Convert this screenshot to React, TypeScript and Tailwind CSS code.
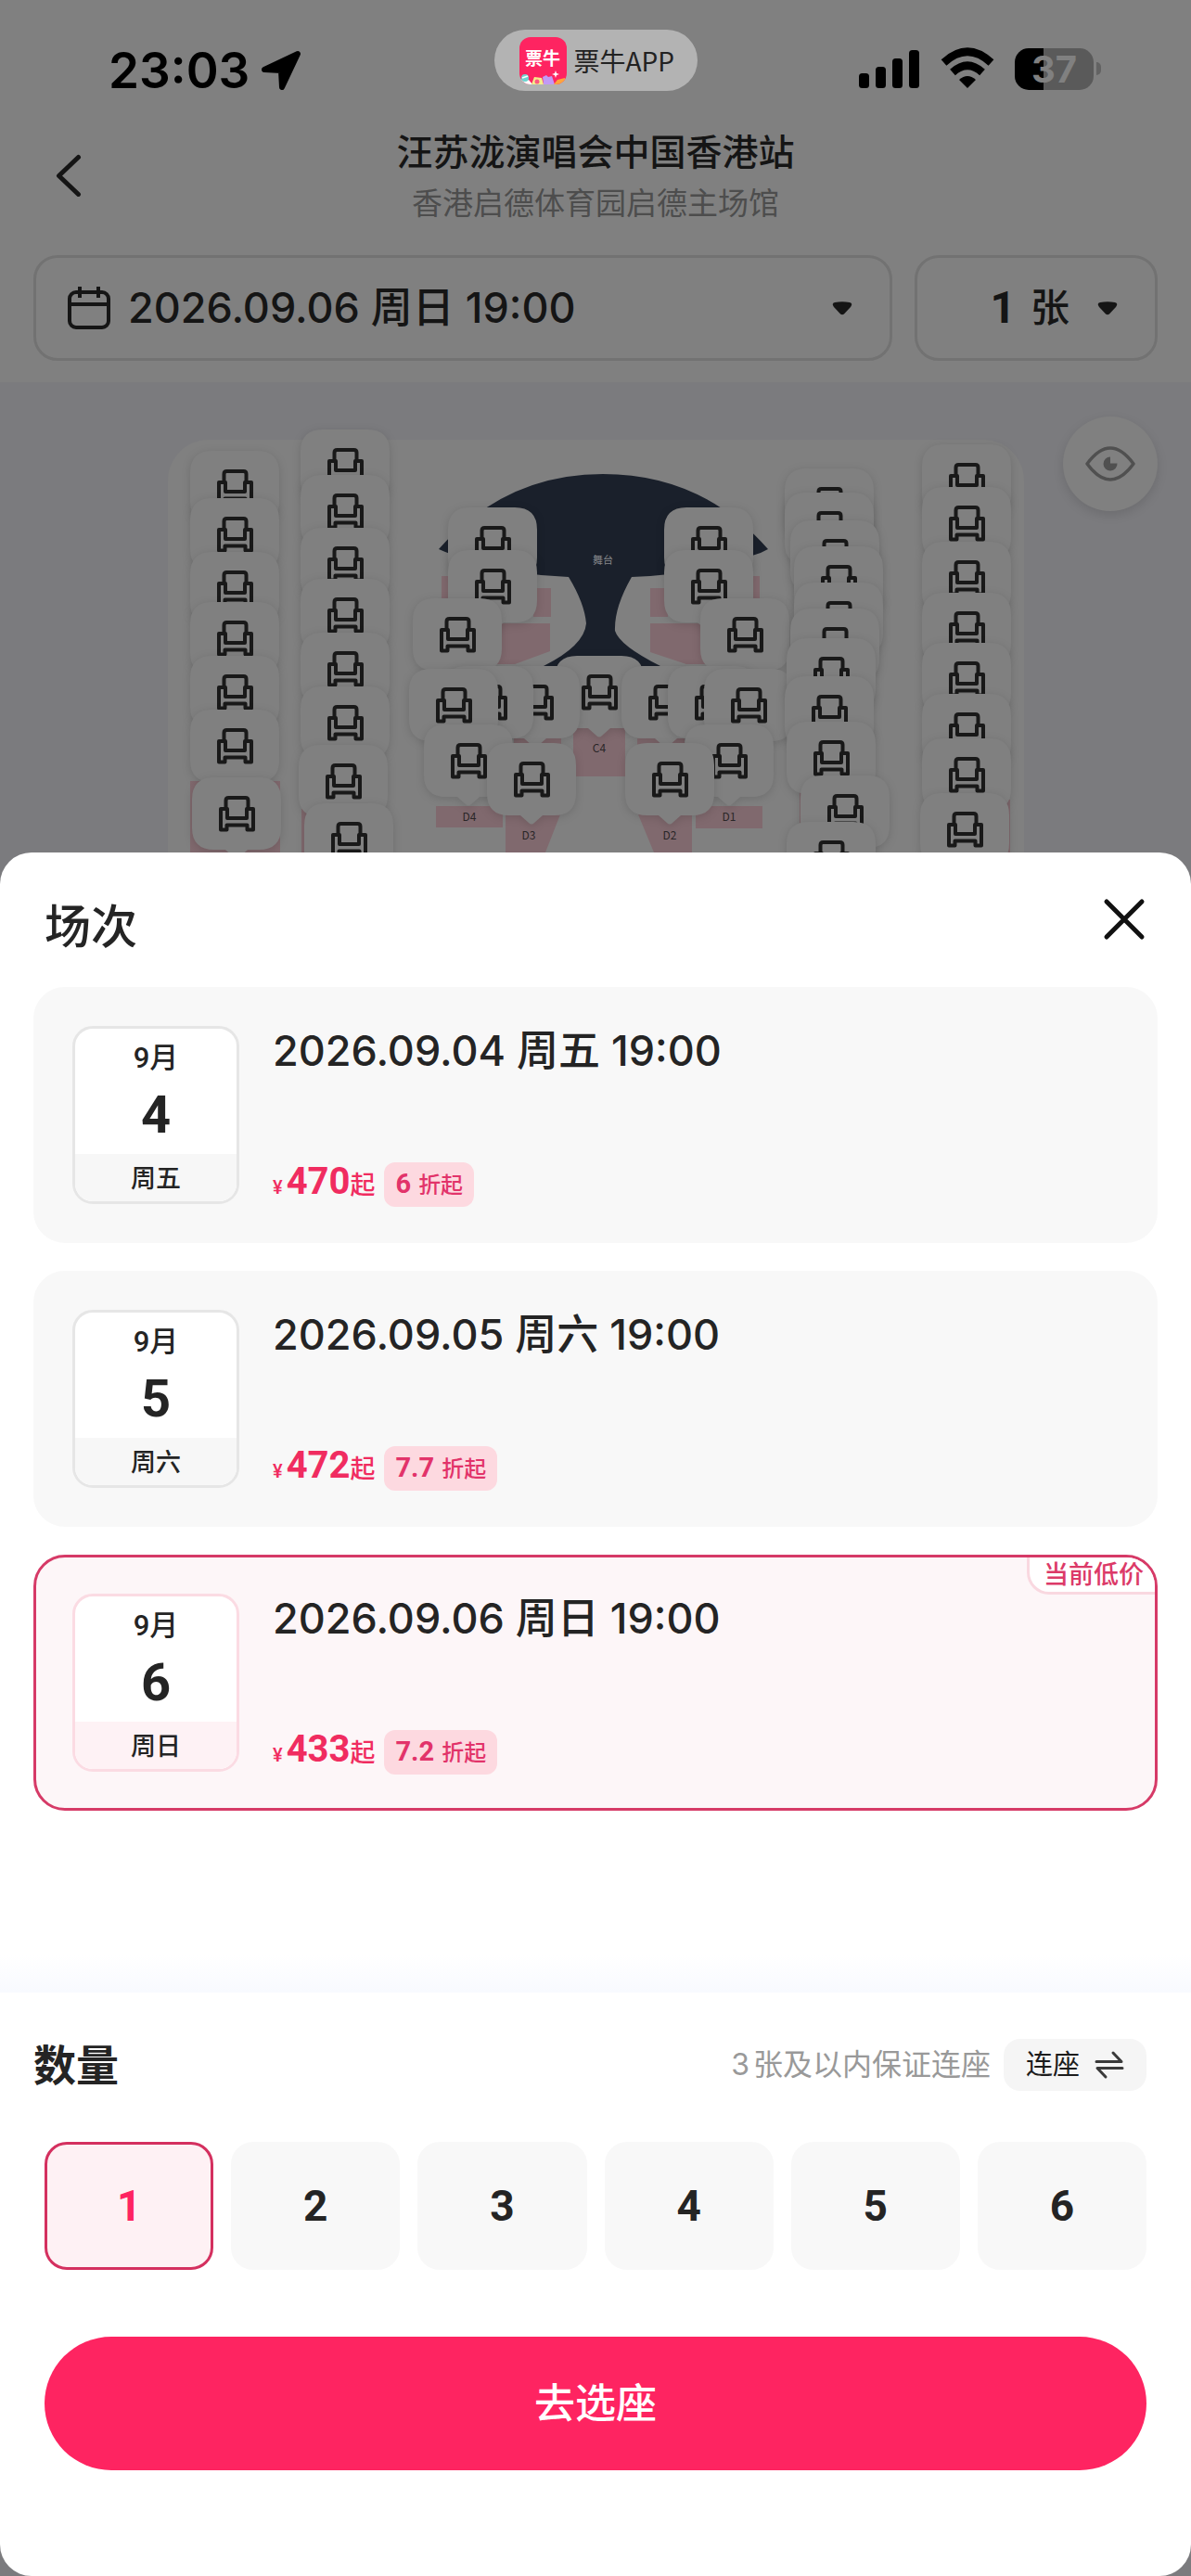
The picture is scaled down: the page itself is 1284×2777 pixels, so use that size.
import { useState } from "react";

type Point = [number, number];

/* Seat markers, painted in order so later ones overlap earlier ones. */
const pins: Point[] = [
  [205, 486], [205, 537], [205, 595], [205, 649], [205, 707], [205, 765], [207, 838],
  [324, 463], [324, 512], [324, 569], [324, 624], [324, 682], [324, 740], [322, 803], [328, 866],
  [598, 707],
  [483, 547], [483, 593], [445, 645], [529, 718], [479, 718], [441, 721], [457, 781], [525, 801],
  [716, 547], [716, 593], [755, 645], [670, 718], [720, 718], [759, 721], [738, 781], [674, 801],
  [846, 505], [846, 531], [852, 561], [856, 589], [856, 628], [852, 656], [848, 688], [846, 729],
  [848, 778], [863, 836], [848, 886],
  [994, 479], [994, 525], [994, 584], [994, 639], [994, 693], [994, 748], [994, 796], [992, 855],
];

const zones: { label: string; x: number; y: number; points: string }[] = [
  { label: "C4", x: 646, y: 811, points: "618,784 674,784 674,837 618,837" },
  { label: "D4", x: 506, y: 885, points: "470,869 542,869 542,892 470,892" },
  { label: "D3", x: 570, y: 905, points: "545,878 604,878 588,919 545,919" },
  { label: "D2", x: 722, y: 905, points: "688,878 746,878 746,919 705,919" },
  { label: "D1", x: 786, y: 885, points: "750,869 822,869 822,893 750,893" },
];

const blocks = [
  "476,621 485,621 485,645 476,645",
  "575,634 594,634 594,665 575,665",
  "530,672 593,672 593,702 555,716 530,716",
  "701,634 720,634 720,665 701,665",
  "810,621 819,621 819,645 810,645",
  "701,672 760,672 760,716 740,716 701,703",
  "554,796 605,796 605,805 554,805",
  "687,796 738,796 738,805 687,805",
  "205,842 302,842 302,919 205,919",
  "325,872 345,872 345,919 325,919",
  "862,850 896,850 896,919 862,919",
  "1020,862 1089,862 1089,919 1020,919",
];

function SeatPin({ at }: { at: Point }) {
  return (
    <g transform={`translate(${at[0]} ${at[1]})`} className="drop-shadow-[0_2px_5px_rgba(0,0,0,0.14)]">
      <path
        d="M24 0H72Q96 0 96 24V54Q96 78 72 78H60L51 86Q48 89 45 86L36 78H24Q0 78 0 54V24Q0 0 24 0Z"
        fill="#808080"
      />
      <g transform="translate(29 20)" fill="none" stroke="#191919" strokeWidth="4" strokeLinejoin="round">
        <path d="M7.500 13V5Q7.500 2 10.500 2H28.500Q31.500 2 31.500 5V13" />
        <path d="M2 14H9V24H30V14H37V36.500H30.500V31.500H8.500V36.500H2Z" />
      </g>
    </g>
  );
}

function VenueMap() {
  return (
    <svg width="1284" height="507" viewBox="0 412 1284 507" className="shrink-0" role="img" aria-label="座位图">
      <rect x="181" y="474" width="923" height="600" rx="44" fill="#808080" />
      {blocks.map((p) => (
        <polygon key={p} points={p} fill="#80696e" />
      ))}
      <path
        d="M473 592Q545 511 650 511Q757 511 828 592L820 596Q750 620 681 622Q662 655 663 680Q668 696 712 718H586Q630 696 632 672Q630 650 613 622Q545 620 480 595Z"
        fill="#1a202b"
      />
      <text x="650" y="608" textAnchor="middle" fontSize="11" fill="#85868a">舞台</text>
      {zones.map((z) => (
        <polygon key={z.label} points={z.points} fill="#80696e" />
      ))}
      {pins.map((p) => (
        <SeatPin key={p.join()} at={p} />
      ))}
      {zones.map((z) => (
        <text key={z.label} x={z.x} y={z.y} textAnchor="middle" fontSize="12" fill="#2a2628" className="font-['Noto_Sans_CJK_SC',sans-serif]">
          {z.label}
        </text>
      ))}
    </svg>
  );
}

function StatusBar() {
  return (
    <div className="flex h-[134px] items-start justify-between px-[97px] text-black">
      <div className="flex w-[340px] items-center gap-3 pt-[43px] pl-5">
        <span className="text-[53px] leading-[66px] font-semibold">23:03</span>
        <svg width="44" height="44" viewBox="0 0 44 44" aria-hidden="true">
          <path d="M40 4L23 40L22 22L4 21Z" fill="#000" stroke="#000" strokeWidth="6" strokeLinejoin="round" />
        </svg>
      </div>
      <div className="mt-8 flex h-[66px] w-[219px] items-center gap-2 rounded-full bg-[#b3b3b3] pl-[27px]">
        <div className="relative flex h-[51px] w-[51px] shrink-0 justify-center overflow-hidden rounded-xl bg-[#fe2461] pt-[10px] text-[19px] leading-[28px] font-bold text-white">
          <span>票牛</span>
          <svg className="absolute bottom-0 left-0" width="51" height="16" viewBox="0 0 51 16" aria-hidden="true">
            <path d="M0 16V10L6 12L10 11L14 16Z" fill="#fff" />
            <circle cx="6" cy="9" r="4" fill="#6fd3cf" />
            <path d="M3 9L9 7" stroke="#fff" strokeWidth="1.500" />
            <path d="M13 16L16 8L24 9L26 16Z" fill="#f3ef8b" />
            <circle cx="19" cy="13" r="2.500" fill="#fe5a80" />
            <path d="M26 16L25 8L29 6L31 8L35 7L38 16Z" fill="#c19af5" />
            <path d="M37 16L41 11L49 9L51 16Z" fill="#ffa53c" />
            <path d="M39 1L40 4L43 5L40 6L39 9L38 6L35 5L38 4Z" fill="#fff" />
          </svg>
        </div>
        <span className="font-['Noto_Sans_CJK_SC',sans-serif] text-[28px] leading-[44px] whitespace-nowrap text-[#222]">
          票牛APP
        </span>
      </div>
      <div className="flex w-[340px] items-center justify-end pt-[50px]">
        <svg width="66" height="48" viewBox="0 0 66 48" aria-hidden="true">
          <rect x="0" y="29" width="11" height="16" rx="3.500" />
          <rect x="18" y="22" width="11" height="23" rx="3.500" />
          <rect x="36" y="13" width="11" height="32" rx="3.500" />
          <rect x="54" y="4" width="11" height="41" rx="3.500" />
        </svg>
        <svg className="ml-[22px]" width="58" height="48" viewBox="0 0 58 48" aria-hidden="true">
          <path d="M3.500 17.500Q29 -6 54.500 17.500" fill="none" stroke="#000" strokeWidth="8.500" />
          <path d="M13 28Q29 13.500 45 28" fill="none" stroke="#000" strokeWidth="8.500" />
          <path d="M20 36Q29 28 38 36L29 45Z" />
        </svg>
        <div className="ml-[22px] flex h-[45px] w-[85px] items-center justify-center rounded-[15px] bg-[linear-gradient(90deg,#000_36%,#5a5a5a_36%)] text-[40px] leading-[45px] font-bold text-[#808080]">
          37
        </div>
        <div className="ml-[3px] h-[14px] w-[5px] rounded-r-full bg-[#626262]" />
      </div>
    </div>
  );
}

function Caret() {
  return (
    <svg width="22" height="15" viewBox="0 0 22 15" aria-hidden="true">
      <path d="M3 1Q11 -0.500 19 1Q23 2 20 6L13 13.500Q11 15 9 13.500L2 6Q-1 2 3 1Z" fill="#151515" />
    </svg>
  );
}

function Header() {
  return (
    <header className="flex flex-col bg-[#808080] text-[#151515]">
      <StatusBar />
      <div className="flex items-center px-9">
        <button aria-label="返回" className="flex h-[60px] w-[60px] items-center pl-6">
          <svg width="28" height="46" viewBox="0 0 28 46" aria-hidden="true">
            <path d="M24.500 3.500L3.500 23.500L24.500 43.500" fill="none" stroke="#151515" strokeWidth="5" strokeLinecap="round" strokeLinejoin="round" />
          </svg>
        </button>
        <div className="flex flex-1 flex-col items-center">
          <h1 className="text-[39px] leading-[60px] font-medium">汪苏泷演唱会中国香港站</h1>
          <p className="text-[33px] leading-[50px] text-[#4d4d4d]">香港启德体育园启德主场馆</p>
        </div>
        <div className="w-[60px]" />
      </div>
      <div className="flex gap-6 px-9 pt-[31px] pb-[23px]">
        <button className="flex h-[114px] flex-1 items-center rounded-[26px] border-3 border-[#727272] px-[34px]">
          <svg width="46" height="48" viewBox="0 0 46 48" fill="none" stroke="#151515" strokeWidth="4" aria-hidden="true">
            <rect x="2" y="7" width="42" height="38" rx="7" />
            <path d="M3 20H43M13 1V13M33 1V13" />
          </svg>
          <span className="ml-[19px] text-[45px] leading-[60px] font-medium">2026.09.06 周日 19:00</span>
          <span className="mr-[6px] ml-auto">
            <Caret />
          </span>
        </button>
        <button className="flex h-[114px] w-[262px] items-center justify-end rounded-[26px] border-3 border-[#727272] pr-10">
          <span className="font-[Roboto,'Noto_Sans_CJK_SC',sans-serif] text-[48px] leading-[60px] font-bold">1</span>
          <span className="mr-[30px] ml-4 text-[42px] leading-[60px] font-medium">张</span>
          <Caret />
        </button>
      </div>
    </header>
  );
}

type Session = {
  day: string;
  week: string;
  date: string;
  price: string;
  discount: string;
  lowest?: boolean;
};

const sessions: Session[] = [
  { day: "4", week: "周五", date: "2026.09.04 周五 19:00", price: "470", discount: "6" },
  { day: "5", week: "周六", date: "2026.09.05 周六 19:00", price: "472", discount: "7.7" },
  { day: "6", week: "周日", date: "2026.09.06 周日 19:00", price: "433", discount: "7.2", lowest: true },
];

function SessionCard({ session, selected, onSelect }: { session: Session; selected: boolean; onSelect: () => void }) {
  return (
    <button
      aria-pressed={selected}
      onClick={onSelect}
      className={
        "relative flex h-[276px] overflow-hidden rounded-[34px] border-3 px-[39px] pt-[39px] text-left " +
        (selected ? "border-[#d63a67] bg-[#fdf6f8]" : "border-[#f8f8f8] bg-[#f8f8f8]")
      }
    >
      <span
        className={
          "flex h-[192px] w-[180px] shrink-0 flex-col items-center overflow-hidden rounded-[22px] border-3 bg-white font-[Roboto,'Noto_Sans_CJK_SC',sans-serif] " +
          (selected ? "border-[#fbdbe3]" : "border-[#e6e6e6]")
        }
      >
        <span className="pt-1 text-[31px] leading-[56px] font-medium">9月</span>
        <span className="text-[56px] leading-[66px] font-bold">{session.day}</span>
        <span
          className={
            "mt-[9px] w-full flex-1 text-center text-[27px] leading-[54px] font-medium " +
            (selected ? "bg-[#fef2f5]" : "bg-[#f7f7f7]")
          }
        >
          {session.week}
        </span>
      </span>
      <span className="ml-9 flex h-[198px] flex-col justify-between">
        <span className="text-[45px] leading-[54px] font-medium">{session.date}</span>
        <span className="flex items-center font-[Roboto,'Noto_Sans_CJK_SC',sans-serif] text-[#f02c60]">
          <span className="flex items-baseline leading-[48px]">
            <span className="mr-1 text-[20px] font-medium">¥</span>
            <span className="text-[40px] font-bold">{session.price}</span>
            <span className="text-[27px] font-medium">起</span>
          </span>
          <span className="ml-[10px] flex h-12 items-baseline gap-2 rounded-[12px] bg-[#fdd9e0] px-3 leading-[46px] text-[#e2336a]">
            <span className="text-[29px] font-bold">{session.discount}</span>
            <span className="text-[24px] font-medium">折起</span>
          </span>
        </span>
      </span>
      {session.lowest && (
        <span className="absolute top-0 right-0 h-10 rounded-bl-[24px] border-b-3 border-l-3 border-[#f9d8e0] bg-white pr-3 pl-[15px] text-[27px] leading-[37px] font-medium text-[#dc3a68]">
          当前低价
        </span>
      )}
    </button>
  );
}

export default function App() {
  const [picked, setPicked] = useState(2);
  const [count, setCount] = useState(1);

  return (
    <div className="flex min-h-screen flex-col bg-[#7b7b7e] font-[Inter,'Noto_Sans_CJK_SC',sans-serif] text-[#242424]">
      <Header />
      <div className="relative flex justify-center overflow-hidden">
        <VenueMap />
        <button
          aria-label="查看视角"
          className="absolute top-[37px] right-9 flex h-[102px] w-[102px] items-center justify-center rounded-full bg-[#808080] shadow-[0_4px_12px_rgba(0,0,0,0.12)]"
        >
          <svg width="54" height="38" viewBox="0 0 54 38" aria-hidden="true">
            <path d="M2 19Q27 -15 52 19Q27 53 2 19Z" fill="none" stroke="#505050" strokeWidth="3.500" strokeLinejoin="round" />
            <path d="M27 11.500V18.500H34.500A7.500 7.500 0 1 1 27 11.500Z" fill="#505050" />
          </svg>
        </button>
      </div>

      <section className="flex flex-1 flex-col rounded-[34px] bg-white" aria-label="选择场次">
        <div className="flex h-[145px] items-start justify-between pr-[49px] pl-12">
          <h2 className="pt-[43px] text-[50px] leading-[74px] font-medium">场次</h2>
          <button aria-label="关闭" className="mt-[49px]">
            <svg width="46" height="46" viewBox="0 0 46 46" aria-hidden="true">
              <path d="M4 4L42 42M42 4L4 42" stroke="#111" strokeWidth="5" strokeLinecap="round" />
            </svg>
          </button>
        </div>
        <div className="flex flex-col gap-[30px] px-9">
          {sessions.map((s, i) => (
            <SessionCard key={s.date} session={s} selected={i === picked} onSelect={() => setPicked(i)} />
          ))}
        </div>

        <div className="mt-[156px] h-10 bg-linear-to-b from-white to-[#f8faff]" />
        <div className="flex items-center pt-[44px] pr-12 pl-9">
          <h2 className="text-[46px] leading-[68px] font-bold">数量</h2>
          <span className="ml-auto flex gap-1 text-[32px] leading-[56px] text-[#999]">
            <span>3</span>
            <span>张及以内保证连座</span>
          </span>
          <button className="ml-[14px] flex h-14 items-center gap-4 rounded-[18px] bg-[#f5f5f5] px-6 text-[29px] text-[#1c1c1c]">
            连座
            <svg width="32" height="32" viewBox="0 0 32 32" fill="none" stroke="#3a3a3a" strokeWidth="3" strokeLinecap="round" strokeLinejoin="round" aria-hidden="true">
              <path d="M2 12.500H29L20 3M30 19.500H3L12 29" />
            </svg>
          </button>
        </div>
        <div className="mt-[49px] grid grid-cols-6 gap-[19px] px-12">
          {[1, 2, 3, 4, 5, 6].map((n) => (
            <button
              key={n}
              aria-pressed={n === count}
              onClick={() => setCount(n)}
              className={
                "h-[138px] rounded-[24px] border-3 font-[Roboto,sans-serif] text-[46px] font-bold " +
                (n === count ? "border-[#d4305f] bg-[#fef1f4] text-[#fe2461]" : "border-[#f8f8f8] bg-[#f8f8f8]")
              }
            >
              {n}
            </button>
          ))}
        </div>
        <button className="mx-12 mt-[72px] mb-[113px] h-36 rounded-full bg-[#fe2461] text-[44px] font-medium text-white">
          去选座
        </button>
      </section>
    </div>
  );
}
